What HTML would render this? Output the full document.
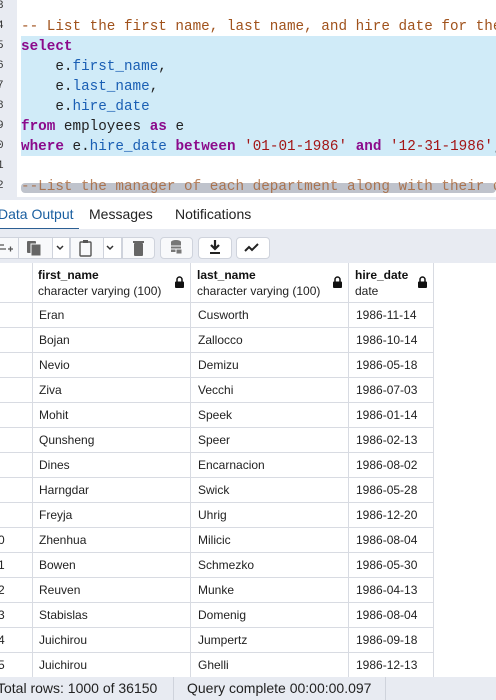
<!DOCTYPE html><html><head><style>
*{margin:0;padding:0;box-sizing:border-box}
body{width:496px;height:700px;overflow:hidden;background:#fff;font-family:"Liberation Sans",sans-serif;position:relative}
.ed{position:absolute;left:0;top:0;width:496px;height:197px;background:#fff;font-family:"Liberation Mono",monospace;font-size:14.3px}
.gut{position:absolute;left:0;top:0;width:17px;height:197px;background:#e8ebf2}
.ln{position:absolute;left:-3px;width:12px;height:20px;line-height:20px;font-size:11px;color:#333}
.cl{position:absolute;left:21px;height:20px;line-height:20px;white-space:pre;color:#222}
.hl{position:absolute;left:21px;top:36px;width:475px;height:120px;background:#d0ebf8}
.c{color:#a0521c}.k{color:#8b0a8b;font-weight:bold}.f{color:#1a5fb4}.s{color:#a31515}
.tabs{position:absolute;top:197px;left:0;width:496px;height:32px;border-top:3px solid #e8ebf2;background:#fff;font-size:14px;color:#222}
.tab{position:absolute;top:6px}
.tb{position:absolute;top:229px;left:0;width:496px;height:34px;background:#e8ebf2}
.b{position:absolute;top:8px;height:22px;background:#f8f9fb;border:1px solid #cfd3dc;border-radius:4px}
.hd{position:absolute;top:263px;height:40px;border-right:1px solid #d8dbe2;border-bottom:1px solid #d8dbe2;font-size:12px;padding:4px 0 0 6px;color:#222;line-height:16px}
.hd b{font-weight:bold;color:#111}
.lock{position:absolute;right:6px;top:13px;width:9px;height:12px}
.row{position:absolute;left:0;width:434px;height:25px;border-bottom:1px solid #d8dbe2;font-size:12px;color:#222;line-height:24px}
.row span{position:absolute;top:0;height:25px;border-right:1px solid #d8dbe2;padding-left:7px}
.foot{position:absolute;top:677px;left:0;width:496px;height:23px;background:#e8ebf2;font-size:14px;line-height:23px;color:#222}
</style></head><body>
<div class="ed">
<div class="gut"></div>
<div class="hl"></div>
<div class="ln" style="top:-4px">3</div><div class="ln" style="top:16px">4</div><div class="ln" style="top:36px">5</div><div class="ln" style="top:56px">6</div><div class="ln" style="top:76px">7</div><div class="ln" style="top:96px">8</div><div class="ln" style="top:116px">9</div><div class="ln" style="top:136px">0</div><div class="ln" style="top:156px">1</div><div class="ln" style="top:176px">2</div>
<div class="cl c" style="top:17px">-- List the first name, last name, and hire date for the</div>
<div class="cl" style="top:37px"><span class="k">select</span></div>
<div class="cl" style="top:57px">    e.<span class="f">first_name</span>,</div>
<div class="cl" style="top:77px">    e.<span class="f">last_name</span>,</div>
<div class="cl" style="top:97px">    e.<span class="f">hire_date</span></div>
<div class="cl" style="top:117px"><span class="k">from</span> employees <span class="k">as</span> e</div>
<div class="cl" style="top:137px"><span class="k">where</span> e.<span class="f">hire_date</span> <span class="k">between</span> <span class="s">'01-01-1986'</span> <span class="k">and</span> <span class="s">'12-31-1986'</span>;</div>
<div style="position:absolute;left:21px;top:183px;width:475px;height:10px;background:#bfc3cc;border-radius:4px"></div>
<div class="cl c" style="top:177px;opacity:.7">--List the manager of each department along with their d</div>
</div>
<div class="tabs">
<div class="tab" style="left:-2px;color:#1a5fa0">Data Output</div>
<div style="position:absolute;left:0;top:28px;width:79px;height:3px;background:#2c5f93"></div>
<div class="tab" style="left:89px">Messages</div>
<div class="tab" style="left:175px">Notifications</div>
</div>
<div class="tb">
<div class="b" style="left:-4px;width:159px"></div>
<div style="position:absolute;top:8px;left:18px;width:1px;height:22px;background:#cfd3dc"></div>
<div style="position:absolute;top:8px;left:52px;width:18px;height:22px;background:#fff;border:1px solid #cfd3dc"></div>
<div style="position:absolute;top:8px;left:103px;width:19px;height:22px;background:#fff;border:1px solid #cfd3dc"></div>
<div style="position:absolute;top:8px;left:70px;width:1px;height:22px;background:#cfd3dc"></div>
<div style="position:absolute;top:8px;left:122px;width:1px;height:22px;background:#cfd3dc"></div>
<div class="b" style="left:160px;width:33px"></div>
<div class="b" style="left:198px;width:34px;background:#fff"></div>
<div class="b" style="left:236px;width:34px;background:#fff"></div>
<svg width="496" height="34" style="position:absolute;left:0;top:0">
<g stroke="#555" stroke-width="1.3" fill="none"><path d="M0 16h4M0 20h6M8 20h5M10.5 17.5v5"/></g>
<rect x="27" y="12" width="9" height="12" fill="#666" rx="1"/><rect x="31" y="15" width="10" height="12" fill="#666" stroke="#f8f9fb"/>
<path d="M57 17l3 3 3-3M107 17l3 3 3-3" stroke="#333" stroke-width="1.5" fill="none"/>
<rect x="80" y="13" width="11" height="14" rx="1" fill="none" stroke="#555" stroke-width="1.4"/><rect x="83" y="11" width="5" height="3" fill="#555"/>
<rect x="134" y="14" width="9" height="13" rx="1" fill="#666"/><rect x="133" y="12" width="11" height="2" fill="#666"/>
<ellipse cx="176" cy="13" rx="5" ry="2" fill="#777"/><rect x="171" y="13" width="10" height="10" fill="#777"/><path d="M171 17h10M171 20h10" stroke="#f8f9fb"/><rect x="176" y="20" width="6" height="5" fill="#777" stroke="#f8f9fb"/>
<path d="M215 11v8M211 16l4 4 4-4" stroke="#222" stroke-width="2.2" fill="none"/><path d="M210 24h10" stroke="#222" stroke-width="2"/>
<path d="M245 22l4-4 3 3 6-6" stroke="#222" stroke-width="2" fill="none"/>
</svg>
</div>
<div class="hd" style="left:0;width:33px"></div>
<div class="hd" style="left:32px;width:159px"><b>first_name</b><br>character varying (100)<svg class="lock" viewBox="0 0 9 12"><path d="M2 6V3.5a2.5 2.5 0 0 1 5 0V6" stroke="#111" stroke-width="1.5" fill="none"/><rect x="0" y="5.5" width="9" height="6.5" rx="1" fill="#111"/></svg></div>
<div class="hd" style="left:191px;width:158px"><b>last_name</b><br>character varying (100)<svg class="lock" viewBox="0 0 9 12"><path d="M2 6V3.5a2.5 2.5 0 0 1 5 0V6" stroke="#111" stroke-width="1.5" fill="none"/><rect x="0" y="5.5" width="9" height="6.5" rx="1" fill="#111"/></svg></div>
<div class="hd" style="left:349px;width:85px"><b>hire_date</b><br>date<svg class="lock" viewBox="0 0 9 12"><path d="M2 6V3.5a2.5 2.5 0 0 1 5 0V6" stroke="#111" stroke-width="1.5" fill="none"/><rect x="0" y="5.5" width="9" height="6.5" rx="1" fill="#111"/></svg></div>
<div style="position:absolute;left:0;top:303px">
<div class="row" style="top:0"><span style="left:-5px;width:38px"></span><span style="left:32px;width:159px">Eran</span><span style="left:191px;width:158px">Cusworth</span><span style="left:349px;width:85px">1986-11-14</span></div>
<div class="row" style="top:25px"><span style="left:-5px;width:38px"></span><span style="left:32px;width:159px">Bojan</span><span style="left:191px;width:158px">Zallocco</span><span style="left:349px;width:85px">1986-10-14</span></div>
<div class="row" style="top:50px"><span style="left:-5px;width:38px"></span><span style="left:32px;width:159px">Nevio</span><span style="left:191px;width:158px">Demizu</span><span style="left:349px;width:85px">1986-05-18</span></div>
<div class="row" style="top:75px"><span style="left:-5px;width:38px"></span><span style="left:32px;width:159px">Ziva</span><span style="left:191px;width:158px">Vecchi</span><span style="left:349px;width:85px">1986-07-03</span></div>
<div class="row" style="top:100px"><span style="left:-5px;width:38px"></span><span style="left:32px;width:159px">Mohit</span><span style="left:191px;width:158px">Speek</span><span style="left:349px;width:85px">1986-01-14</span></div>
<div class="row" style="top:125px"><span style="left:-5px;width:38px"></span><span style="left:32px;width:159px">Qunsheng</span><span style="left:191px;width:158px">Speer</span><span style="left:349px;width:85px">1986-02-13</span></div>
<div class="row" style="top:150px"><span style="left:-5px;width:38px"></span><span style="left:32px;width:159px">Dines</span><span style="left:191px;width:158px">Encarnacion</span><span style="left:349px;width:85px">1986-08-02</span></div>
<div class="row" style="top:175px"><span style="left:-5px;width:38px"></span><span style="left:32px;width:159px">Harngdar</span><span style="left:191px;width:158px">Swick</span><span style="left:349px;width:85px">1986-05-28</span></div>
<div class="row" style="top:200px"><span style="left:-5px;width:38px"></span><span style="left:32px;width:159px">Freyja</span><span style="left:191px;width:158px">Uhrig</span><span style="left:349px;width:85px">1986-12-20</span></div>
<div class="row" style="top:225px"><span style="left:-5px;width:38px;padding-left:3px">0</span><span style="left:32px;width:159px">Zhenhua</span><span style="left:191px;width:158px">Milicic</span><span style="left:349px;width:85px">1986-08-04</span></div>
<div class="row" style="top:250px"><span style="left:-5px;width:38px;padding-left:3px">1</span><span style="left:32px;width:159px">Bowen</span><span style="left:191px;width:158px">Schmezko</span><span style="left:349px;width:85px">1986-05-30</span></div>
<div class="row" style="top:275px"><span style="left:-5px;width:38px;padding-left:3px">2</span><span style="left:32px;width:159px">Reuven</span><span style="left:191px;width:158px">Munke</span><span style="left:349px;width:85px">1986-04-13</span></div>
<div class="row" style="top:300px"><span style="left:-5px;width:38px;padding-left:3px">3</span><span style="left:32px;width:159px">Stabislas</span><span style="left:191px;width:158px">Domenig</span><span style="left:349px;width:85px">1986-08-04</span></div>
<div class="row" style="top:325px"><span style="left:-5px;width:38px;padding-left:3px">4</span><span style="left:32px;width:159px">Juichirou</span><span style="left:191px;width:158px">Jumpertz</span><span style="left:349px;width:85px">1986-09-18</span></div>
<div class="row" style="top:350px"><span style="left:-5px;width:38px;padding-left:3px">5</span><span style="left:32px;width:159px">Juichirou</span><span style="left:191px;width:158px">Ghelli</span><span style="left:349px;width:85px">1986-12-13</span></div>
</div>
<div class="foot"><span style="position:absolute;left:-3px">Total rows: 1000 of 36150</span><div style="position:absolute;left:173px;top:0;width:1px;height:23px;background:#cfd3dc"></div><span style="position:absolute;left:187px">Query complete 00:00:00.097</span><div style="position:absolute;left:385px;top:0;width:1px;height:23px;background:#cfd3dc"></div></div>
</body></html>
